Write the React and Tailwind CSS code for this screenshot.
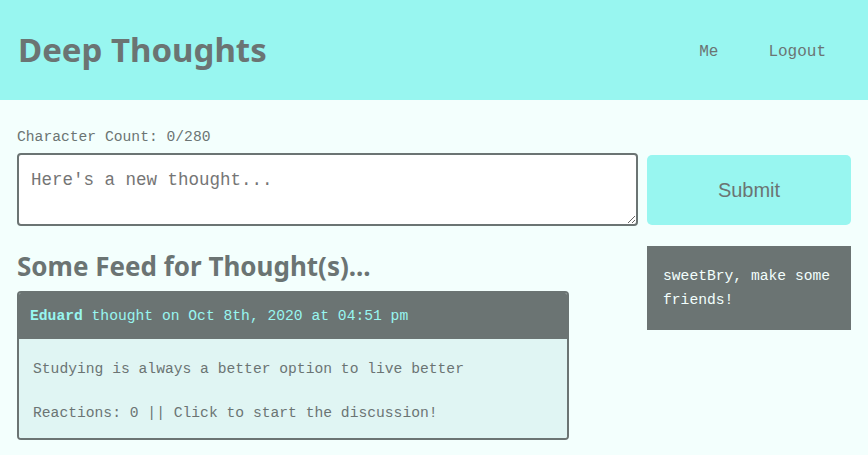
export default function App() {
  const mono = { fontFamily: '"Liberation Mono", "DejaVu Sans Mono", monospace' };
  return (
    <div className="min-h-[455px] bg-[#f3fffd] text-[#6b7473]" style={mono}>
      <header className="h-[100px] bg-[#98f6f0] flex items-center justify-between pl-[18px] pr-[42px]">
        <h1 className="text-[33px] font-bold text-[#6b7473]" style={{ fontFamily: '"Noto Sans", sans-serif' }}>
          Deep Thoughts
        </h1>
        <nav className="flex items-center gap-[50px] pt-[4px] text-[16px] text-[#6b7473]">
          <a href="#">Me</a>
          <a href="#">Logout</a>
        </nav>
      </header>

      <main className="px-[17px] pt-[27px]">
        <form onSubmit={e => e.preventDefault()}>
          <p className="text-[14.67px] leading-[20px] mb-[6px]">Character Count: 0/280</p>
          <div className="flex gap-[9px]">
            <textarea
              placeholder="Here's a new thought..."
              className="w-[621px] h-[73px] bg-white border-2 border-[#6b7473] rounded-[4px] px-[12px] pt-[13px] pb-[8px] text-[17.5px] leading-[24px] placeholder:text-[#757575] outline-none"
              style={mono}
            />
            <button
              type="submit"
              className="w-[204px] h-[70px] mt-[2px] bg-[#98f6f0] rounded-[5px] text-[20px] text-[#6b7473]"
              style={{ fontFamily: '"Liberation Sans", Arial, sans-serif' }}
            >
              Submit
            </button>
          </div>
        </form>

        <div className="flex gap-[78px] mt-[20px]">
          <div className="w-[552px]">
            <h2 className="text-[26px] font-bold leading-[34px] mt-[3px] mb-[8px]" style={{ fontFamily: '"Noto Sans", sans-serif' }}>
              Some Feed for Thought(s)...
            </h2>
            <div className="rounded-[4px] overflow-hidden border-2 border-[#6b7473]">
              <div className="bg-[#6b7473] h-[46px] flex items-center px-[11px] text-[14.67px] text-[#98f6f0]">
                <span className="font-bold">Eduard</span>&nbsp;thought on Oct 8th, 2020 at 04:51 pm
              </div>
              <div className="bg-[#e0f5f3] px-[14px] pt-[19px] pb-[14px] text-[14.67px] leading-[22px] text-[#6b7473]">
                <p>Studying is always a better option to live better</p>
                <p className="mt-[22px]">Reactions: 0 || Click to start the discussion!</p>
              </div>
            </div>
          </div>
          <aside className="w-[204px] h-[84px] bg-[#6b7473] text-[#f3fffd] px-[16px] py-[18px] text-[14.67px] leading-[24px]">
            sweetBry, make some friends!
          </aside>
        </div>
      </main>
    </div>
  );
}
